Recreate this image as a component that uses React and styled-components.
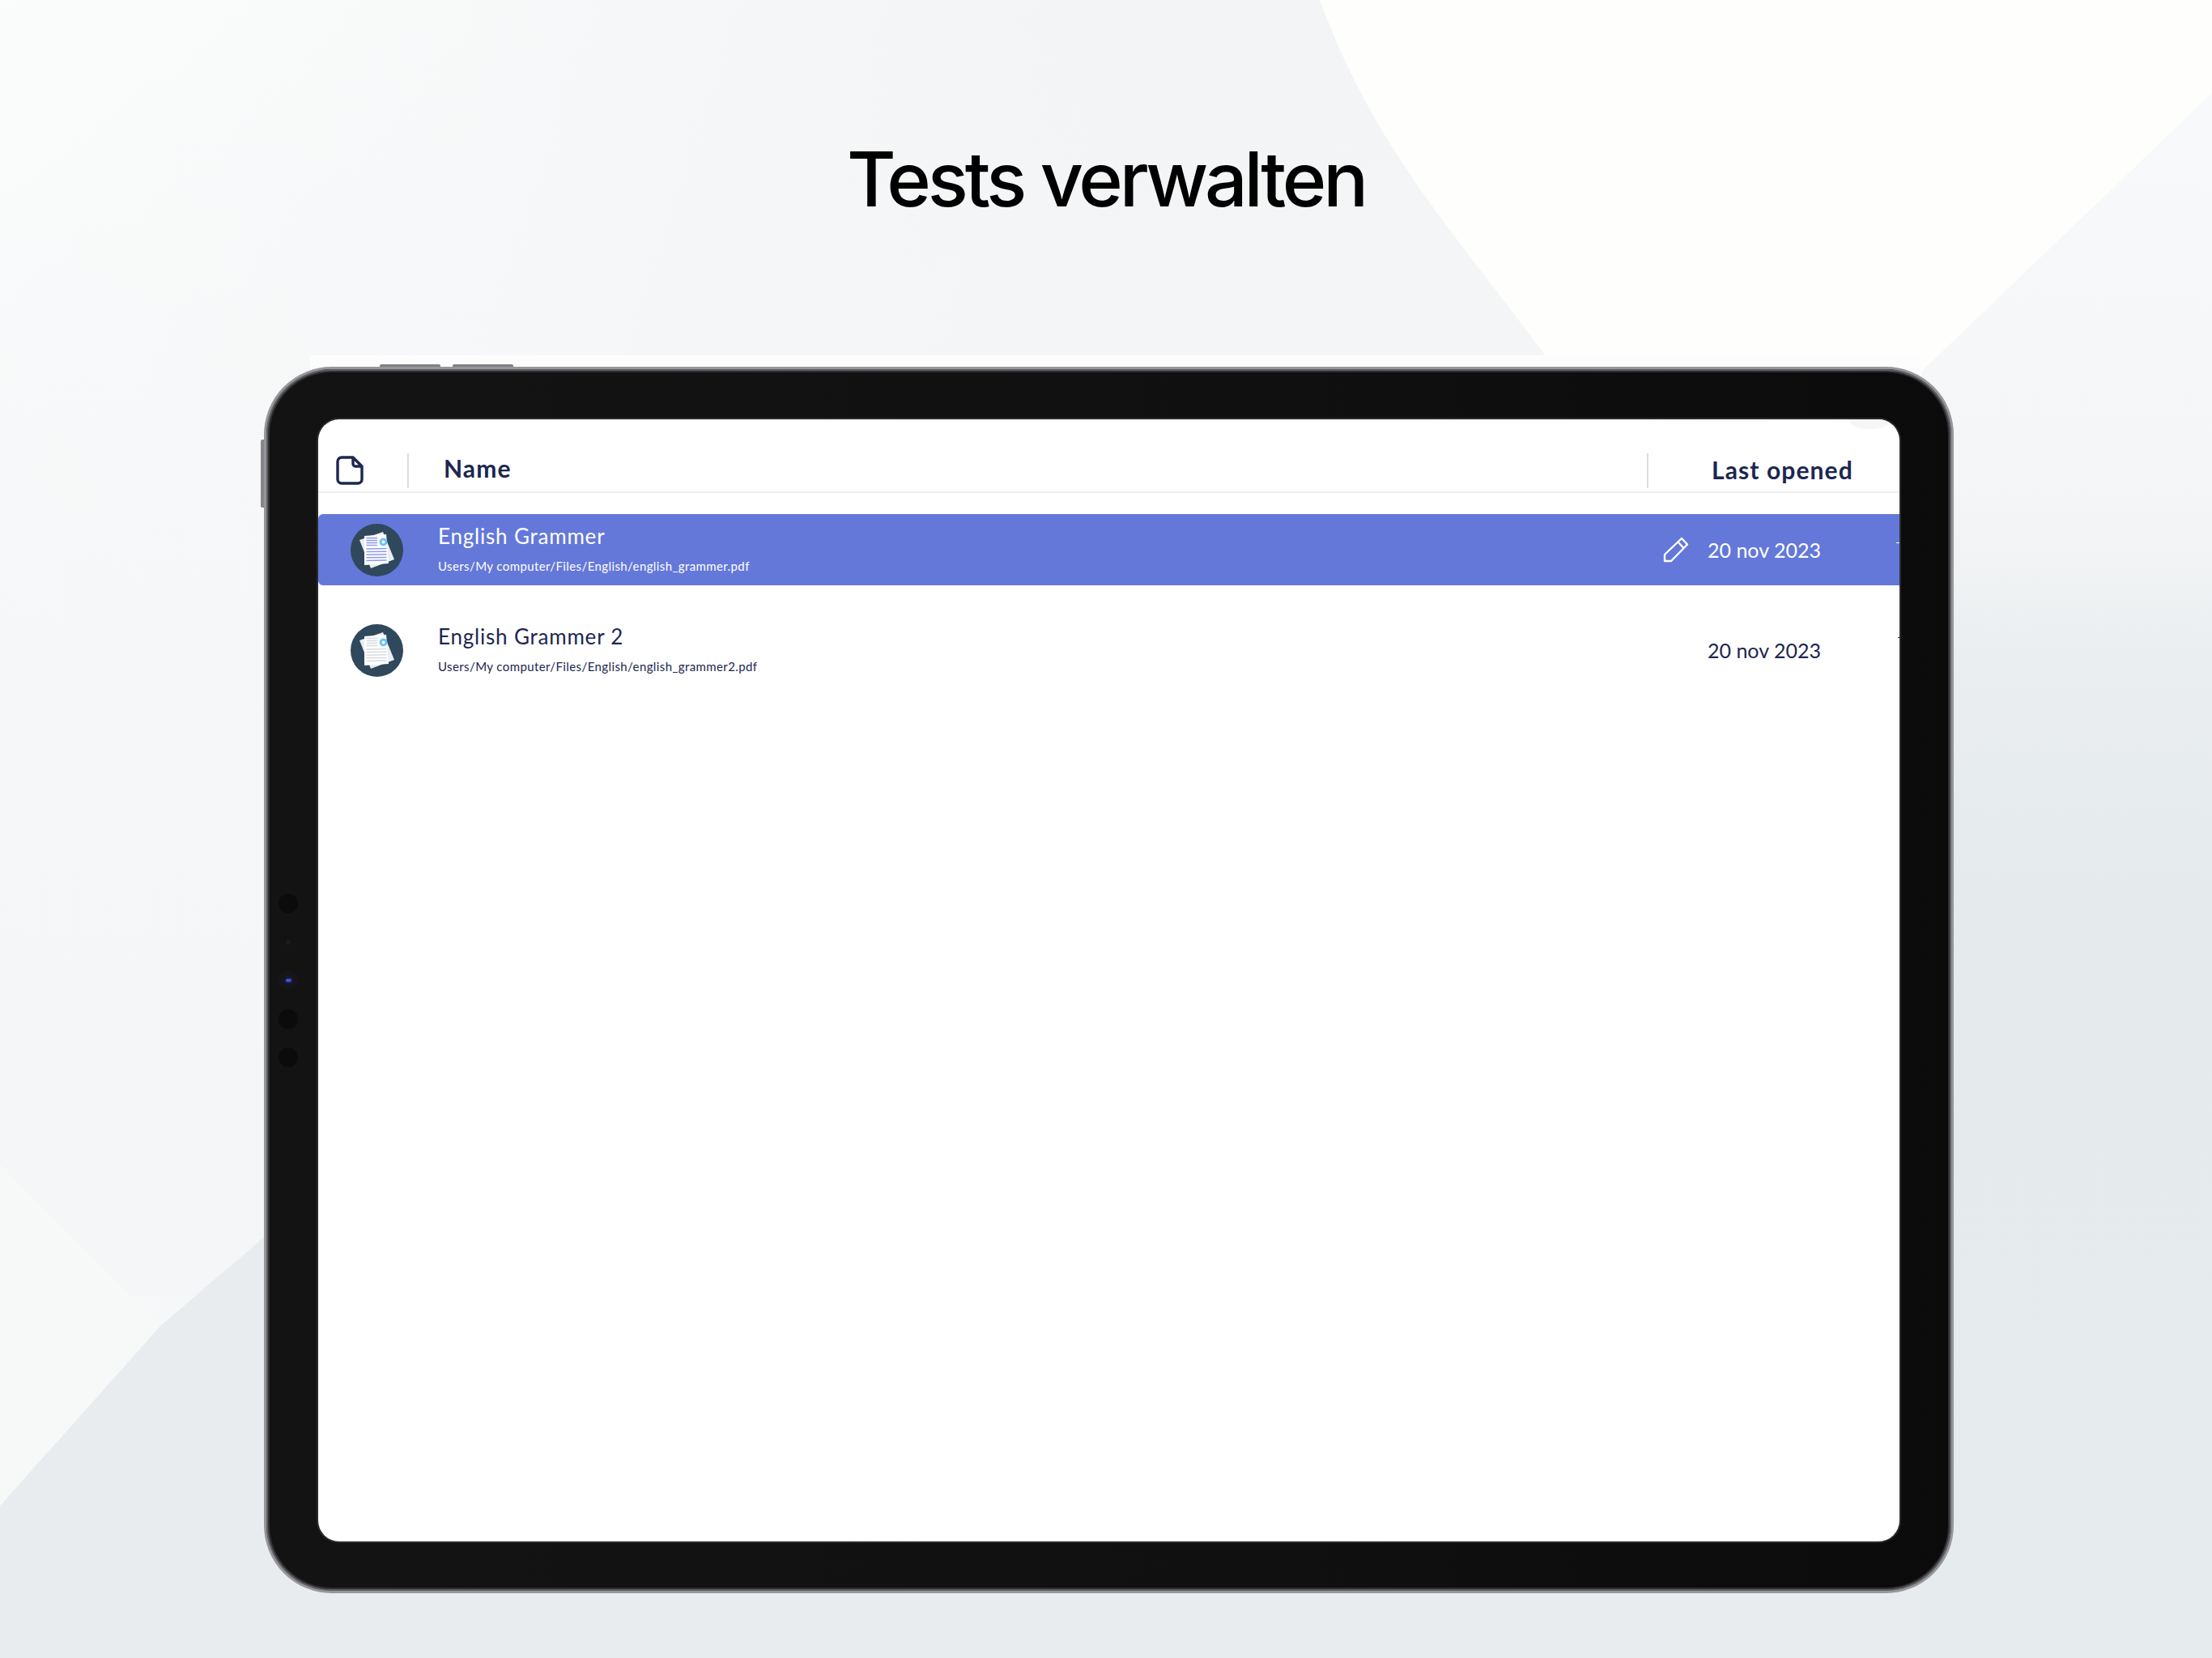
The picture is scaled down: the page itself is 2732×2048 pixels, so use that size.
import styled, { createGlobalStyle } from "styled-components";

const GlobalStyle = createGlobalStyle`
  html, body {
    margin: 0;
    padding: 0;
    background: #e8ecef;
  }
`;

const FONT = `"Lato", "Noto Sans", sans-serif`;
const NAVY = "#1c2750";

const tests = [
  {
    name: "English Grammer",
    path: "Users/My computer/Files/English/english_grammer.pdf",
    date: "20 nov 2023",
    active: true,
  },
  {
    name: "English Grammer 2",
    path: "Users/My computer/Files/English/english_grammer2.pdf",
    date: "20 nov 2023",
    active: false,
  },
];

const Backdrop = () => (
  <BackdropSvg viewBox="0 0 2732 2048">
    <defs>
      <linearGradient id="base" x1="0" y1="0" x2="1" y2="0.25">
        <stop offset="0" stopColor="#fbfcfc" />
        <stop offset="0.5" stopColor="#f2f4f5" />
        <stop offset="1" stopColor="#f4f6f6" />
      </linearGradient>
      <linearGradient id="fade" gradientUnits="userSpaceOnUse" x1="0" y1="0" x2="0" y2="1500">
        <stop offset="0" stopColor="#f5f7f8" stopOpacity="0" />
        <stop offset="0.6" stopColor="#f5f7f8" stopOpacity="1" />
        <stop offset="1" stopColor="#f4f6f8" stopOpacity="1" />
      </linearGradient>
      <linearGradient id="side" gradientUnits="userSpaceOnUse" x1="0" y1="115" x2="0" y2="2048">
        <stop offset="0" stopColor="#f8f9fa" />
        <stop offset="0.25" stopColor="#f5f6f7" />
        <stop offset="0.38" stopColor="#e9edef" />
        <stop offset="0.52" stopColor="#e5eaed" />
        <stop offset="1" stopColor="#e6ebee" />
      </linearGradient>
    </defs>
    <rect width="2732" height="2048" fill="url(#base)" />
    <rect width="2732" height="1600" fill="url(#fade)" />
    <path d="M0 1438 L198 1638 L0 1860 Z" fill="#f7f9f9" />
    <path d="M0 1860 L198 1638 L330 1525 H2732 V2048 H0 Z" fill="#e8ecef" />
    <path d="M2372 460 L2732 115 V2048 H2372 Z" fill="url(#side)" />
    <path
      d="M1630 0 H2732 V115 L2372 460 H1924 C1800 290 1700 190 1630 0 Z"
      fill="#fefefd"
    />
    <rect x="383" y="439" width="1990" height="30" fill="#fdfdfd" />
  </BackdropSvg>
);

const FileIcon = () => (
  <svg width="34" height="36" viewBox="0 0 34 36" fill="none">
    <path
      d="M7 2H21L32 13V29a5 5 0 0 1-5 5H7a5 5 0 0 1-5-5V7a5 5 0 0 1 5-5Z"
      stroke={NAVY}
      strokeWidth="3.4"
      strokeLinejoin="round"
    />
    <path
      d="M21 2V10a3 3 0 0 0 3 3H32"
      stroke={NAVY}
      strokeWidth="3.4"
      strokeLinejoin="round"
    />
  </svg>
);

const PencilIcon = () => (
  <svg width="32" height="32" viewBox="0 0 32 32" fill="none">
    <path
      d="M2 30V22L23 2L30 9.5L10 30Z M18.5 6.5L25.5 14"
      stroke="#fff"
      strokeWidth="2.4"
      strokeLinejoin="round"
    />
  </svg>
);

const DocBadge = ({ lines }) => {
  const short = [17.5, 20.5, 23.5, 26.5];
  const long = [31, 34.6, 38.2, 41.8, 45.4];
  return (
    <svg width="65" height="65" viewBox="0 0 65 65">
      <circle cx="32.5" cy="32.5" r="32.5" fill="#2f485c" />
      <polygon points="11,20 40,10 54,44 25,55" fill="#e9edf2" />
      <polygon points="17,15 44,13 47,49 17,51" fill="#fff" />
      {short.map((y) => (
        <line key={y} x1="19.5" x2="33" y1={y} y2={y} stroke={lines} strokeWidth="1.5" />
      ))}
      {long.map((y) => (
        <line key={y} x1="19.5" x2="44.5" y1={y} y2={y - 0.4} stroke={lines} strokeWidth="1.5" />
      ))}
      <circle cx="40.5" cy="22.5" r="3.4" fill="none" stroke="#6cc5f5" strokeWidth="3" />
    </svg>
  );
};

const App = () => {
  return (
    <Page>
      <GlobalStyle />
      <Backdrop />
      <Title>Tests verwalten</Title>
      <Device>
        <TopButton $left={140} />
        <TopButton $left={230} />
        <SideButton />
        <Sensors>
          <Sensor />
          <Sensor $hollow>
            <SensorDot />
          </Sensor>
          <Sensor $lit>
            <Led />
          </Sensor>
          <Sensor />
          <Sensor />
        </Sensors>
        <Screen>
          <Notch />
          <Header>
            <IconCell>
              <FileIcon />
            </IconCell>
            <NameHead>Name</NameHead>
            <DateHead>Last opened</DateHead>
          </Header>
          <Rows>
            {tests.map((test) => (
              <Row key={test.name} $active={test.active}>
                <DocBadge lines={test.active ? "#8c9aea" : "#d6dbe3"} />
                <RowText>
                  <RowName>{test.name}</RowName>
                  <RowPath>{test.path}</RowPath>
                </RowText>
                <EditSlot>{test.active && <PencilIcon />}</EditSlot>
                <RowDate>{test.date}</RowDate>
                <EdgeTick $active={test.active} />
              </Row>
            ))}
          </Rows>
        </Screen>
      </Device>
    </Page>
  );
};

const Page = styled.div`
  position: relative;
  width: 2732px;
  height: 2048px;
  overflow: hidden;
  box-sizing: border-box;
  padding-top: 171px;
  display: flex;
  flex-direction: column;
`;
const BackdropSvg = styled.svg`
  position: absolute;
  inset: 0;
  width: 2732px;
  height: 2048px;
`;
const Title = styled.h1`
  position: relative;
  margin: 0;
  height: 101px;
  font: 500 93px/100px "Inter", "Liberation Sans", sans-serif;
  letter-spacing: -4.2px;
  color: #000;
  text-align: center;
`;
const Device = styled.div`
  position: relative;
  box-sizing: border-box;
  width: 2087px;
  height: 1515px;
  margin: 181px 0 0 326px;
  padding: 62px 64px 61px 64px;
  display: flex;
  border: 3px solid #97979b;
  border-radius: 84px;
  background: linear-gradient(90deg, #131313, #101010 60%, #0b0b0b);
  box-shadow: inset 0 0 0 2px #5f5f63, inset 0 0 0 4px #2e2e30;
`;
const TopButton = styled.div`
  position: absolute;
  top: -6px;
  left: ${(p) => p.$left}px;
  width: 75px;
  height: 3px;
  border-radius: 2px 2px 0 0;
  background: #808085;
`;
const SideButton = styled.div`
  position: absolute;
  top: 87px;
  left: -7px;
  width: 4px;
  height: 84px;
  border-radius: 2px 0 0 2px;
  background: #85858a;
`;
const Sensors = styled.div`
  position: absolute;
  top: 648px;
  left: 15px;
  width: 24px;
  display: flex;
  flex-direction: column;
  align-items: center;
  gap: 23.5px;
`;
const Sensor = styled.div`
  width: 24px;
  height: 24px;
  border-radius: 50%;
  background: ${(p) => (p.$hollow ? "transparent" : p.$lit ? "#15151b" : "#0b0b0b")};
  display: flex;
  align-items: center;
  justify-content: center;
`;
const SensorDot = styled.div`
  width: 6px;
  height: 6px;
  border-radius: 50%;
  background: #1c1c1c;
`;
const Led = styled.div`
  width: 7px;
  height: 4px;
  border-radius: 2px;
  background: #3f4fd8;
  box-shadow: 0 0 5px #2a36a0;
`;
const Screen = styled.div`
  position: relative;
  flex: 1;
  overflow: hidden;
  background: #fff;
  border-radius: 26px;
  box-shadow: 0 0 0 2px #2a2a2c;
`;
const Notch = styled.div`
  position: absolute;
  top: -16px;
  right: 8px;
  width: 56px;
  height: 28px;
  border-radius: 50%;
  background: #f6f6f6;
`;
const Header = styled.div`
  position: relative;
  box-sizing: border-box;
  height: 91px;
  padding-bottom: 4px;
  display: flex;
  align-items: flex-end;
  border-bottom: 2px solid #efefef;
`;
const IconCell = styled.div`
  box-sizing: border-box;
  width: 112px;
  height: 43px;
  padding: 3px 0 0 22px;
  border-right: 2px solid #dcdcdc;
`;
const NameHead = styled.div`
  flex: 1;
  height: 43px;
  padding-left: 43px;
  font: 700 30px/37px ${FONT};
  letter-spacing: 1.1px;
  color: ${NAVY};
`;
const DateHead = styled.div`
  box-sizing: border-box;
  width: 312px;
  height: 43px;
  padding-left: 78px;
  border-left: 2px solid #dcdcdc;
  font: 700 30px/40px ${FONT};
  letter-spacing: 1.1px;
  color: ${NAVY};
  white-space: nowrap;
`;
const Rows = styled.div`
  padding-top: 26px;
  display: flex;
  flex-direction: column;
  gap: 36px;
`;
const Row = styled.div`
  position: relative;
  box-sizing: border-box;
  height: 88px;
  padding: 0 97px 0 40px;
  display: flex;
  align-items: center;
  border-radius: 6px 0 0 6px;
  background: ${(p) => (p.$active ? "#6478da" : "transparent")};
  color: ${(p) => (p.$active ? "#fff" : NAVY)};
`;
const RowText = styled.div`
  flex: 1;
  margin-left: 43px;
  padding-bottom: 4px;
  display: flex;
  flex-direction: column;
  gap: 12px;
`;
const RowName = styled.div`
  font: 400 26px/32px ${FONT};
  letter-spacing: 0.8px;
`;
const RowPath = styled.div`
  font: 400 15px/18px ${FONT};
  letter-spacing: 0.4px;
`;
const EditSlot = styled.div`
  width: 32px;
  height: 32px;
  margin-right: 23px;
`;
const RowDate = styled.div`
  width: 140px;
  margin-top: -1px;
  font: 400 25px/32px ${FONT};
  white-space: nowrap;
`;
const EdgeTick = styled.div`
  position: absolute;
  top: ${(p) => (p.$active ? 35 : 28)}px;
  right: 0;
  width: ${(p) => (p.$active ? 4 : 2)}px;
  height: 1px;
  background: ${(p) => (p.$active ? "#fff" : "#222")};
`;

export default App;
